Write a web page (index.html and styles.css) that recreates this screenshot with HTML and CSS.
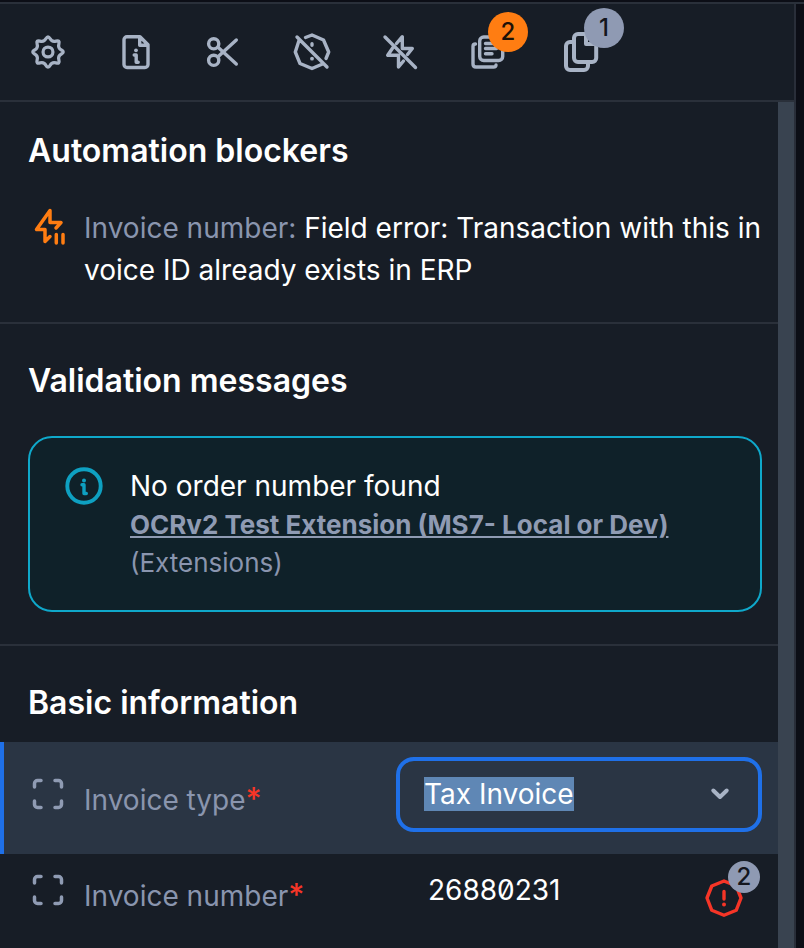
FILE: index.html
```
<!DOCTYPE html>
<html lang="en">
<head>
<meta charset="utf-8">
<title>Document sidebar</title>
<link rel="stylesheet" href="styles.css">
</head>
<body>
<div class="app">
<aside class="panel">
  <nav class="toolbar">
    <span class="tool"><svg class="icon" viewBox="-20 -20 40 40"><g transform="scale(.95)"><path d="M14.1 2.1Q10.2 4.2 11.45 8.45Q12.7 12.7 8.45 11.45Q4.2 10.2 2.1 14.1Q0 18-2.1 14.1Q-4.2 10.2-8.45 11.45Q-12.7 12.7-11.45 8.45Q-10.2 4.2-14.1 2.1Q-18 0-14.1-2.1Q-10.2-4.2-11.45-8.45Q-12.7-12.7-8.45-11.45Q-4.2-10.2-2.1-14.1Q0-18 2.1-14.1Q4.2-10.2 8.45-11.45Q12.7-12.7 11.45-8.45Q10.2-4.2 14.1-2.1Q18 0 14.1 2.1Z"/><circle r="5.2"/></g></svg></span>
    <span class="tool"><svg class="icon" viewBox="116 32 40 40"><path d="M127 36.700H140L148 44.700V64.500a3 3 0 0 1-3 3H127a3 3 0 0 1-3-3V39.700a3 3 0 0 1 3-3ZM139.700 37V45.200H148M134.200 55h2v7.200h2"/><circle class="dot" cx="136" cy="50.300" r="1.900"/></svg></span>
    <span class="tool"><svg class="icon" viewBox="204 32 40 40"><circle cx="213.700" cy="43.800" r="5.100"/><circle cx="213.700" cy="60.300" r="5.100"/><path d="M218 47.200 236.300 64M236.300 40 218 56.800"/></svg></span>
    <span class="tool"><svg class="icon" viewBox="292 32 40 40"><path d="M299 40.500 295.300 52 300 63.500 312 68.500 322.500 64M305.500 37.500 312 35 323.500 40 328.700 52 326 58.500M297 37 327 67M312 43.700v1.500"/><circle class="dot" cx="312" cy="58.700" r="1.900"/></svg></span>
    <span class="tool"><svg class="icon" viewBox="380 32 40 40"><path d="M396.500 43.500 402.300 36.700V48.500H412.300L407.500 54.500M393 47.500 387.700 55.300H398.500V67L403.500 61M385 37 415.500 67.500"/></svg></span>
    <span class="tool"><svg class="icon" viewBox="468 32 40 40"><rect x="479.700" y="37" width="23" height="23.500" rx="4"/><path d="M485.500 43.500h11M485.500 48.500h11M485.500 53.800h6.500M475.500 44Q473 44 473 46.500V64Q473 67 476 67H493.500Q496 67 496 65"/></svg><b class="badge badge-orange">2</b></span>
    <span class="tool tool-copy"><svg class="icon icon-bold" viewBox="560 32 40 40"><path d="M578 34H586L596.200 44V58a4 4 0 0 1-4 4H578a4 4 0 0 1-4-4V38a4 4 0 0 1 4-4ZM586 34V44H596M572.500 42H570a4 4 0 0 0-4 4V66a4 4 0 0 0 4 4H584a4 4 0 0 0 4-4V63"/></svg><b class="badge">1</b></span>
  </nav>
  <div class="body">
    <main class="content">
      <section class="section blockers">
        <h2>Automation blockers</h2>
        <div class="blocker">
          <svg class="icon orange" viewBox="28 206 40 40"><path d="M56 228 61 222.500H50V210.500L36.500 229.500H45V241.500L50 236.500M56.300 234.500V243M63 234.500V243"/></svg>
          <p><span class="muted">Invoice number:</span> Field error: Transaction with this invoice ID already exists in ERP</p>
        </div>
      </section>
      <section class="section validation">
        <h2>Validation messages</h2>
        <div class="alert">
          <svg class="icon cyan" viewBox="64 466 40 40"><circle cx="84" cy="486" r="16.700"/><path class="stem" d="M82 484.700h2v8.800h2.300"/><circle class="dot" cx="84" cy="480.500" r="2"/></svg>
          <div>
            <div class="alert-title">No order number found</div>
            <a class="source">OCRv2 Test Extension (MS7- Local or Dev)</a>
            <div class="kind">(Extensions)</div>
          </div>
        </div>
      </section>
      <section class="basic">
        <h2>Basic information</h2>
        <div class="row active">
          <svg class="icon frame" viewBox="0 0 32 32"><path d="M2.500 9V5.500a3 3 0 0 1 3-3H9M23 2.500h3.500a3 3 0 0 1 3 3V9M29.500 23v3.500a3 3 0 0 1-3 3H23M9 29.500H5.500a3 3 0 0 1-3-3V23"/></svg>
          <label>Invoice type<i>*</i></label>
          <div class="select"><span class="picked">Tax Invoice</span><svg class="icon chevron" viewBox="708 783 24 24"><path d="M713.300 791.500 720 798 726.700 791.500"/></svg></div>
        </div>
        <div class="row">
          <svg class="icon frame" viewBox="0 0 32 32"><path d="M2.500 9V5.500a3 3 0 0 1 3-3H9M23 2.500h3.500a3 3 0 0 1 3 3V9M29.500 23v3.500a3 3 0 0 1-3 3H23M9 29.500H5.500a3 3 0 0 1-3-3V23"/></svg>
          <label>Invoice number<i>*</i></label>
          <div class="value">26880231</div>
          <span class="error"><svg class="icon red" viewBox="704 878 40 40"><path d="M724 881 736.200 886 741 898 736.200 910.300 724 915.300 711.800 910.300 707 898 711.800 886ZM724 891.500v7.500"/><circle class="dot" cx="724" cy="904.500" r="2"/></svg><b class="badge badge-small">2</b></span>
        </div>
      </section>
    </main>
    <div class="scrollbar"></div>
  </div>
</aside>
</div>
</body>
</html>
```
FILE: styles.css
```
* { box-sizing: border-box; }
body {
  display: flow-root;
  margin: 0;
  background: #0c0e16;
  color: #fff;
  font-family: Inter, "Liberation Sans", sans-serif;
  font-size: 28px;
}
.app {
  height: 946px;
  overflow: hidden;
  border-top: 2px solid #2a303a;
  margin-top: 2px;
}
.panel {
  width: 796px;
  height: 100%;
  display: flex;
  flex-direction: column;
  background: #171d26;
  border-right: 2px solid #292e39;
}
.toolbar {
  flex: none;
  height: 98px;
  padding: 28px 28px 0;
  display: flex;
  gap: 48px;
  border-bottom: 2px solid #2a303a;
}
.tool { position: relative; width: 40px; height: 40px; }
.tool-copy { margin-left: 4px; }
.icon {
  display: block;
  flex: none;
  width: 40px;
  height: 40px;
  overflow: visible;
  fill: none;
  stroke: #a8b3c5;
  stroke-width: 3.4;
  stroke-linecap: round;
  stroke-linejoin: round;
}
.icon-bold { stroke-width: 4; }
.icon .dot { fill: #a8b3c5; stroke: none; }
.orange { stroke: #ff7d12; stroke-width: 3.5; }
.cyan { stroke: #0ea0c1; stroke-width: 3.9; }
.cyan .stem { stroke-width: 3.4; }
.cyan .dot { fill: #0ea0c1; }
.red { stroke: #f63527; stroke-width: 3.4; }
.red .dot { fill: #f63527; }
.badge {
  position: absolute;
  left: 24px;
  top: -24px;
  width: 40px;
  height: 40px;
  border-radius: 50%;
  background: #8f9ab3;
  color: #14161d;
  font-size: 24px;
  font-weight: 500;
  line-height: 40px;
  text-align: center;
}
.badge-orange { left: 20px; top: -20px; background: #ff7d12; color: #1e1208; }
.badge-small { left: 24px; top: -17px; width: 32px; height: 32px; line-height: 32px; }
.body { flex: 1; min-height: 0; display: flex; }
.content { width: 778px; }
.scrollbar { width: 16px; background: #394350; }
h2 { margin: 0; font-size: 32px; line-height: 40px; font-weight: 600; }
.section { border-bottom: 2px solid #2a303a; padding: 0 16px 0 28px; }
.blockers { height: 222px; padding-top: 29px; }
.blocker { display: flex; gap: 16px; margin-top: 35px; }
.blocker p { flex: 1; margin: 1px 0 0; line-height: 42px; word-break: break-all; }
.muted, label { color: #8a95ae; }
.validation { height: 322px; padding-top: 37px; }
.alert {
  display: flex;
  gap: 26px;
  height: 176px;
  margin-top: 35px;
  padding: 28px 34px;
  border: 2px solid #0fa8ca;
  border-radius: 24px;
  background: #0f2129;
}
.alert-title { line-height: 40px; }
.source { display: block; color: #8f9bb3; font-size: 26px; font-weight: 700; line-height: 38px; text-decoration: underline; white-space: nowrap; }
.kind { color: #8a95ae; font-size: 26px; line-height: 38px; }
.basic { padding-top: 37px; }
.basic h2 { padding-left: 28px; }
.row { display: flex; align-items: flex-start; height: 112px; padding: 20px 16px 0 32px; }
.active { margin-top: 19px; padding: 15px 16px 0 28px; border-left: 4px solid #1f70e8; background: #2a3544; }
.frame { width: 32px; height: 32px; stroke: #8f9bb3; stroke-width: 3.5; }
.active .frame { margin-top: 21px; }
label { width: 312px; padding-left: 20px; line-height: 44px; }
.active label { margin-top: 21px; }
label i { font-style: normal; font-size: 31px; font-weight: 500; line-height: 1; color: #f63527; }
.select {
  display: flex;
  align-items: center;
  justify-content: space-between;
  width: 366px;
  height: 75px;
  margin-left: 20px;
  padding: 0 26px 1px 24px;
  border: 4px solid #1f70e8;
  border-radius: 18px;
}
.picked { background: #5f87b5; line-height: 34px; }
.chevron { width: 24px; height: 24px; stroke-width: 4; }
.value { width: 276px; margin-top: -1px; padding-left: 52px; line-height: 34px; font-feature-settings: "zero"; }
.error { position: relative; margin-top: 4px; margin-left: 52px; }
```
